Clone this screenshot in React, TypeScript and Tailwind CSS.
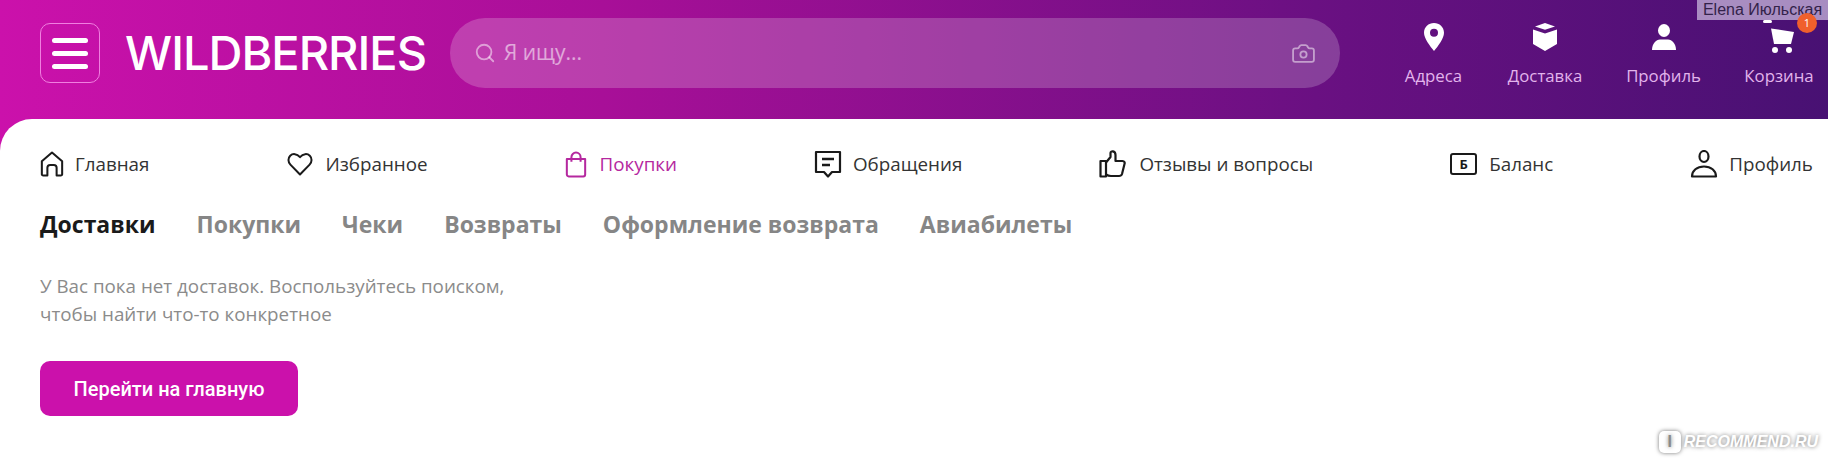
import { Camera, Search } from "lucide-react";

const sans = "font-['Open_Sans','Noto_Sans',sans-serif]";

function HomeIcon() {
  return (
    <svg width="24" height="28" viewBox="0 0 26 28" fill="none" stroke="#1a1a1a" strokeWidth="2.200" strokeLinejoin="round" aria-hidden="true">
      <path d="M2 11 13 1.500 24 11v14a1.500 1.500 0 0 1-1.500 1.500H18V18a3 3 0 0 0-3-3h-4a3 3 0 0 0-3 3v8.500H3.500A1.500 1.500 0 0 1 2 25z" />
    </svg>
  );
}

function HeartIcon() {
  return (
    <svg width="26" height="24" viewBox="0 0 26 24" fill="none" stroke="#1a1a1a" strokeWidth="2" strokeLinejoin="round" aria-hidden="true">
      <path d="M13 22.500 3.400 12.600C.8 9.900.9 6 3.200 3.700c2.500-2.400 6.600-2.200 9.800 1.500 3.200-3.700 7.300-3.900 9.800-1.500 2.300 2.300 2.400 6.200-.2 8.900z" />
    </svg>
  );
}

function BagIcon() {
  return (
    <svg width="22" height="27" viewBox="0 0 24 28" fill="none" stroke="#b5289f" strokeWidth="2.200" strokeLinejoin="round" aria-hidden="true">
      <path d="M2 8h20v17a2 2 0 0 1-2 2H4a2 2 0 0 1-2-2z" />
      <path d="M7 11V6a5 5 0 0 1 10 0v5" />
    </svg>
  );
}

function ChatIcon() {
  return (
    <svg width="28" height="28" viewBox="0 0 28 28" fill="none" stroke="#1a1a1a" strokeWidth="2.200" strokeLinejoin="round" aria-hidden="true">
      <path d="M2 2h24v20h-8l-4 4.500-4-4.500H2z" />
      <path d="M8 9h12M8 15h8" strokeWidth="2.400" />
    </svg>
  );
}

function ThumbIcon() {
  return (
    <svg width="27" height="28" viewBox="0 0 27 28" fill="none" stroke="#1a1a1a" strokeWidth="2.200" strokeLinejoin="round" aria-hidden="true">
      <path d="M1.500 11H7v15.500H1.500z" />
      <path d="M7 12.500 11.500 7V3c0-2.500 5-2.500 5 2v6h7c2 0 2.500 1.500 2 3l-2.500 10c-.5 1.500-1.500 2-3 2H12c-2 0-3.500-.5-5-1.500" />
    </svg>
  );
}

function BalanceIcon() {
  return (
    <div className="flex h-[22px] w-[27px] items-center justify-center rounded-[3px] border-2 border-[#1a1a1a] text-[13px] leading-none font-bold text-[#1a1a1a]">
      Б
    </div>
  );
}

function ProfileIcon() {
  return (
    <svg width="28" height="28" viewBox="0 0 28 28" fill="none" stroke="#1a1a1a" strokeWidth="2.200" strokeLinejoin="round" aria-hidden="true">
      <ellipse cx="14" cy="6.500" rx="4.500" ry="5.500" />
      <path d="M2 26.500c0-6 5-10 12-10s12 4 12 10z" />
    </svg>
  );
}

function PinIcon() {
  return (
    <svg width="20" height="28" viewBox="0 0 20 28" fill="white" aria-hidden="true">
      <path fillRule="evenodd" d="M10 0c5.500 0 10 4.200 10 9.700C20 15.500 14 23 10 28 6 23 0 15.500 0 9.700 0 4.200 4.500 0 10 0zm0 5.800a4 4 0 1 0 0 8 4 4 0 0 0 0-8z" />
    </svg>
  );
}

function BoxIcon() {
  return (
    <svg width="24" height="28" viewBox="0 0 24 28" fill="white" aria-hidden="true">
      <path d="M12 0 22 3.400 12 6.800 2 3.400z" />
      <path d="M0 6.500 12 10.500 24 6.500V21l-12 7L0 21z" />
    </svg>
  );
}

function PersonIcon() {
  return (
    <svg width="24" height="26" viewBox="0 0 24 26" fill="white" aria-hidden="true">
      <ellipse cx="12" cy="6.500" rx="6" ry="6.500" />
      <path d="M0 26c0-6 4-10.500 8-10.500h8c4 0 8 4.500 8 10.500z" />
    </svg>
  );
}

function CartIcon() {
  return (
    <svg width="32" height="34" viewBox="0 0 32 34" fill="white" aria-hidden="true">
      <rect x="0" y="0" width="9" height="3" rx="1.500" />
      <path d="M8 8.500 31 12l-3 12H11z" />
      <circle cx="12" cy="30" r="3" />
      <circle cx="26" cy="30" r="3" />
    </svg>
  );
}

const headerLinks = [
  { label: "Адреса", icon: <PinIcon />, width: "w-[59px]" },
  { label: "Доставка", icon: <BoxIcon />, width: "w-[74px]" },
  { label: "Профиль", icon: <PersonIcon />, width: "w-[73px]" },
  { label: "Корзина", icon: <CartIcon />, width: "w-[68px]" },
];

const navItems = [
  { label: "Главная", icon: <HomeIcon />, gap: "gap-[11px]" },
  { label: "Избранное", icon: <HeartIcon />, gap: "gap-[13px]" },
  { label: "Покупки", icon: <BagIcon />, gap: "gap-[13px]", active: true },
  { label: "Обращения", icon: <ChatIcon />, gap: "gap-[11px]" },
  { label: "Отзывы и вопросы", icon: <ThumbIcon />, gap: "gap-[13px]" },
  { label: "Баланс", icon: <BalanceIcon />, gap: "gap-[12px]" },
  { label: "Профиль", icon: <ProfileIcon />, gap: "gap-[11px]" },
];

const tabs = ["Доставки", "Покупки", "Чеки", "Возвраты", "Оформление возврата", "Авиабилеты"];

export default function App() {
  return (
    <div className={`relative h-[467px] w-full overflow-hidden bg-[linear-gradient(90deg,#cb11ab_0%,#a80f98_33%,#6a1082_72%,#481173_100%)] ${sans}`}>
      <header className="flex h-[119px] items-start pl-10 text-white">
        <button type="button" className="mt-[23px] flex h-[60px] w-[60px] flex-col items-center justify-center gap-[8px] rounded-[10px] border border-[#f07fe0]">
          <span className="h-[5px] w-[36px] rounded-full bg-white" />
          <span className="h-[5px] w-[36px] rounded-full bg-white" />
          <span className="h-[5px] w-[36px] rounded-full bg-white" />
        </button>
        <div className="mt-[22px] ml-[25px] w-[300px] font-['Inter',sans-serif] text-[47px] leading-[62px] font-medium tracking-[-1px] whitespace-nowrap">
          WILDBERRIES
        </div>
        <div className="mt-[18px] ml-[25px] flex h-[70px] w-[890px] items-center rounded-[35px] bg-white/20 pr-[24px] pl-[24px]">
          <Search size={22} strokeWidth={2} className="text-white/50" />
          <span className="ml-[8px] flex-1 text-[21px] text-white/55">Я ищу...</span>
          <Camera size={25} strokeWidth={1.750} className="text-white/50" />
        </div>
        <div className="mt-[20px] ml-[64px] flex items-start gap-[45px]">
          {headerLinks.map((link) => (
            <div key={link.label} className={`flex ${link.width} flex-col items-center`}>
              <div className="flex h-[34px] items-center justify-center">{link.icon}</div>
              <div className="mt-[10px] text-[16.800px] leading-[24px] whitespace-nowrap text-[#e2b4ec]">{link.label}</div>
            </div>
          ))}
        </div>
      </header>

      <main className="h-[348px] rounded-tl-[32px] bg-white pt-[28px] pr-[15px] pl-10">
        <nav className="flex h-[34px] items-center justify-between">
          {navItems.map((item) => (
            <div key={item.label} className={`flex items-center ${item.gap} text-[18.800px] whitespace-nowrap ${item.active ? "text-[#b5289f]" : "text-[#333333]"}`}>
              {item.icon}
              <span>{item.label}</span>
            </div>
          ))}
        </nav>
        <div className="mt-[26px] flex gap-[41px] text-[23px] leading-[34px] font-bold text-[#868686]">
          {tabs.map((tab, i) => (
            <span key={tab} className={i === 0 ? "text-[#1a1a1a]" : ""}>
              {tab}
            </span>
          ))}
        </div>
        <p className="mt-[31px] text-[18.800px] leading-[28px] text-[#8b8b8b]">
          У Вас пока нет доставок. Воспользуйтесь поиском,
          <br />
          чтобы найти что-то конкретное
        </p>
        <button type="button" className="mt-[33px] h-[55px] w-[258px] rounded-[10px] bg-[#cb11ab] font-['Roboto',sans-serif] text-[20px] font-medium text-white">
          Перейти на главную
        </button>
      </main>

      <div className="absolute top-0 right-0 flex h-[20px] w-[131px] items-center justify-center bg-[#b9a3cf]/85 font-['Liberation_Sans',sans-serif] text-[16px] whitespace-nowrap text-[#33224a]">
        Elena Июльская
      </div>
      <div className="absolute top-[13px] right-[11px] flex h-[20px] w-[20px] items-center justify-center rounded-full bg-[#f0602c] text-[11px] text-white">
        1
      </div>
      <div className="absolute top-[430px] right-[10px] flex items-center gap-[3px] font-['Liberation_Sans',sans-serif] text-[16px] font-bold text-white italic [text-shadow:0_0_4px_#777777]">
        <span className="flex h-[22px] w-[22px] items-center justify-center rounded-[5px] bg-white text-[#8a8a8a] not-italic shadow-[0_0_4px_#777777]">I</span>
        RECOMMEND.RU
      </div>
    </div>
  );
}
